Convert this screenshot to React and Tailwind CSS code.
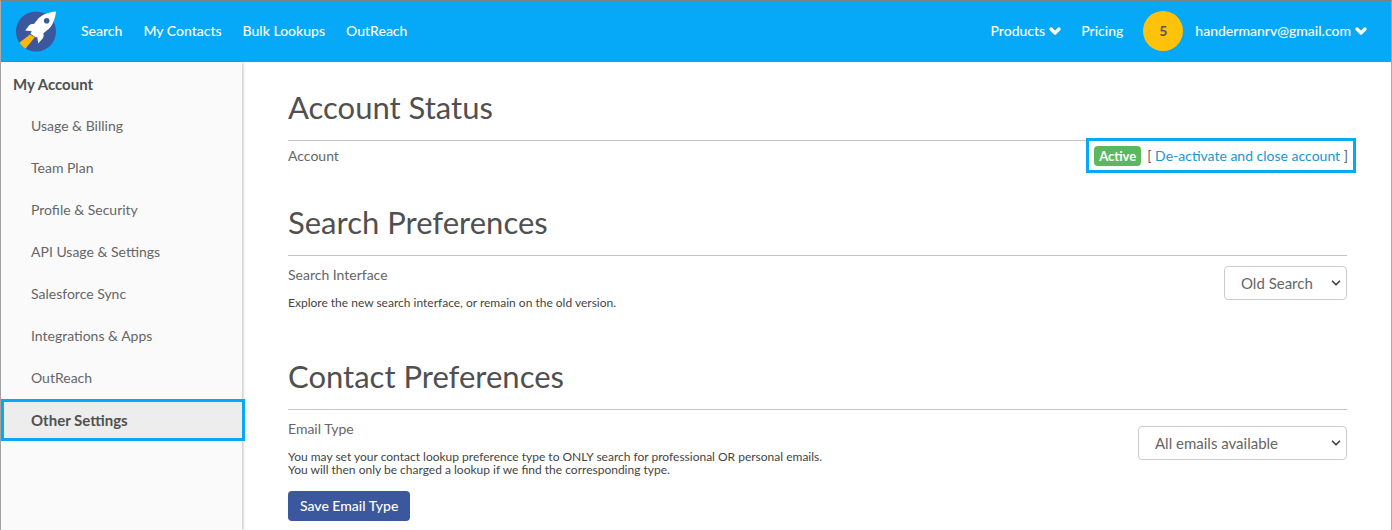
import { useState } from 'react';
import { ChevronDown } from 'lucide-react';

const navLinks = ['Search', 'My Contacts', 'Bulk Lookups', 'OutReach'];

const menuItems = [
  'Usage & Billing',
  'Team Plan',
  'Profile & Security',
  'API Usage & Settings',
  'Salesforce Sync',
  'Integrations & Apps',
  'OutReach',
  'Other Settings',
];

function Logo() {
  return (
    <svg viewBox="0 0 40 40" className="size-10 overflow-visible" aria-hidden="true">
      <circle cx="20" cy="20.5" r="20" fill="#3b579d" />
      <path d="M3.3 31.7 14 23.6l4.8 2.6-9.4 11.6q-3.6-2.6-6.1-6.1z" fill="#ffb70a" />
      <path d="M40 .4C33 1.2 26.5 3.2 22.5 7.2L18.2 12.8C15.6 12.8 13.8 13.6 12.6 15L9.2 19.5 15.8 20.2 14.4 22.8 20 26.6 21.2 25.6 22.2 32.4 26.6 27.6C27.7 26 27.8 24.3 27.4 22.2L33 17.8C36.8 13.8 39.2 7.5 40 .4z" fill="#fff" />
      <circle cx="30.7" cy="9.8" r="2.8" fill="#3b579d" />
    </svg>
  );
}

function Select({ id, options, className }) {
  const [value, setValue] = useState(options[0]);

  return (
    <div className={`relative ${className}`}>
      <select id={id} value={value} onChange={e => setValue(e.target.value)}
        className="h-[34px] w-full appearance-none rounded border border-[#ccc] bg-white pr-8 pl-4 text-[15px] text-[#666]">
        {options.map(o => <option key={o}>{o}</option>)}
      </select>
      <ChevronDown className="pointer-events-none absolute top-1/2 right-1 size-3.5 -translate-y-1/2 text-[#444]" strokeWidth={3} />
    </div>
  );
}

function Section({ title, children }) {
  return (
    <section>
      <h2 className="border-b border-[#c4c4c4] pb-[14px] text-[31px] leading-[38px] text-[#505050]">{title}</h2>
      {children}
    </section>
  );
}

export default function App() {
  return (
    <div className="flex min-h-screen flex-col border-x border-t border-x-[#aaa] border-t-[#808080] bg-white font-[Lato,sans-serif] text-[14px] leading-6 text-[#666]">
      <header className="flex h-[61px] items-center justify-between bg-[#05a9f7] pr-[22px] pb-px pl-[15px] font-medium text-white">
        <nav className="flex items-center gap-[21px]">
          <a href="#" aria-label="Home" className="mr-1"><Logo /></a>
          {navLinks.map(l => <a key={l} href="#">{l}</a>)}
        </nav>
        <div className="flex items-center gap-5">
          <div className="flex items-center gap-[18px]">
            <button className="flex items-center gap-0.5">Products <ChevronDown className="size-4" strokeWidth={5} /></button>
            <a href="#">Pricing</a>
          </div>
          <div className="flex items-center gap-3">
            <span className="flex size-10 items-center justify-center rounded-full bg-[#ffc20a] font-bold text-[#555]">5</span>
            <button className="flex items-center gap-0.5">handermanrv@gmail.com <ChevronDown className="size-4" strokeWidth={5} /></button>
          </div>
        </div>
      </header>

      <div className="flex grow">
        <aside className="z-10 w-[241px] shrink-0 bg-[#fafafa] shadow-[1px_1px_3px_rgba(0,0,0,0.25)]">
          <h3 className="px-3 pt-[10px] pb-[9px] text-[15px] leading-6 font-bold text-[#505050]">My Account</h3>
          <ul>
            {menuItems.map(item => (
              <li key={item}>
                {item === 'Other Settings' ? (
                  <a href="#" aria-current="page" className="-mr-[3px] flex h-[42px] items-center border-3 border-[#05a9f7] bg-[#ededed] pl-[27px] text-[15px] font-bold text-[#505050]">{item}</a>
                ) : (
                  <a href="#" className="flex h-[42px] items-center pl-[30px]">{item}</a>
                )}
              </li>
            ))}
          </ul>
        </aside>

        <main className="grow pt-[26px] pr-11 pl-[46px]">
          <Section title="Account Status">
            <div className="mb-[30px] flex items-start justify-between">
              <span className="pt-[3px]">Account</span>
              <div className="-mt-[3px] -mr-[9px] flex h-[35px] items-center gap-[6px] border-3 border-[#05a9f7] bg-white px-[5px]">
                <span className="rounded bg-[#5cb85c] px-[5px] text-[13px] leading-5 font-bold text-white">Active</span>
                <span>[ <a href="#" className="text-[#1b95d4]">De-activate and close account</a> ]</span>
              </div>
            </div>
          </Section>

          <Section title="Search Preferences">
            <div className="mb-12 flex items-start justify-between pt-[10px]">
              <div>
                <label htmlFor="search-interface" className="block leading-[18px]">Search Interface</label>
                <p className="mt-3 text-[12px] leading-[13px] text-[#444]">Explore the new search interface, or remain on the old version.</p>
              </div>
              <Select id="search-interface" className="w-[123px]" options={['Old Search', 'New Search']} />
            </div>
          </Section>

          <Section title="Contact Preferences">
            <div className="flex items-start justify-between pt-[10px]">
              <div>
                <label htmlFor="email-type" className="block leading-[18px]">Email Type</label>
                <p className="mt-3 text-[12px] leading-[13px] text-[#444]">
                  You may set your contact lookup preference type to ONLY search for professional OR personal emails.<br />
                  You will then only be charged a lookup if we find the corresponding type.
                </p>
                <button className="mt-[15px] h-[30px] rounded bg-[#3b579d] px-3 font-medium text-white">Save Email Type</button>
              </div>
              <Select id="email-type" className="mt-[6px] w-[209px]" options={['All emails available', 'Professional emails only', 'Personal emails only']} />
            </div>
          </Section>
        </main>
      </div>
    </div>
  );
}
